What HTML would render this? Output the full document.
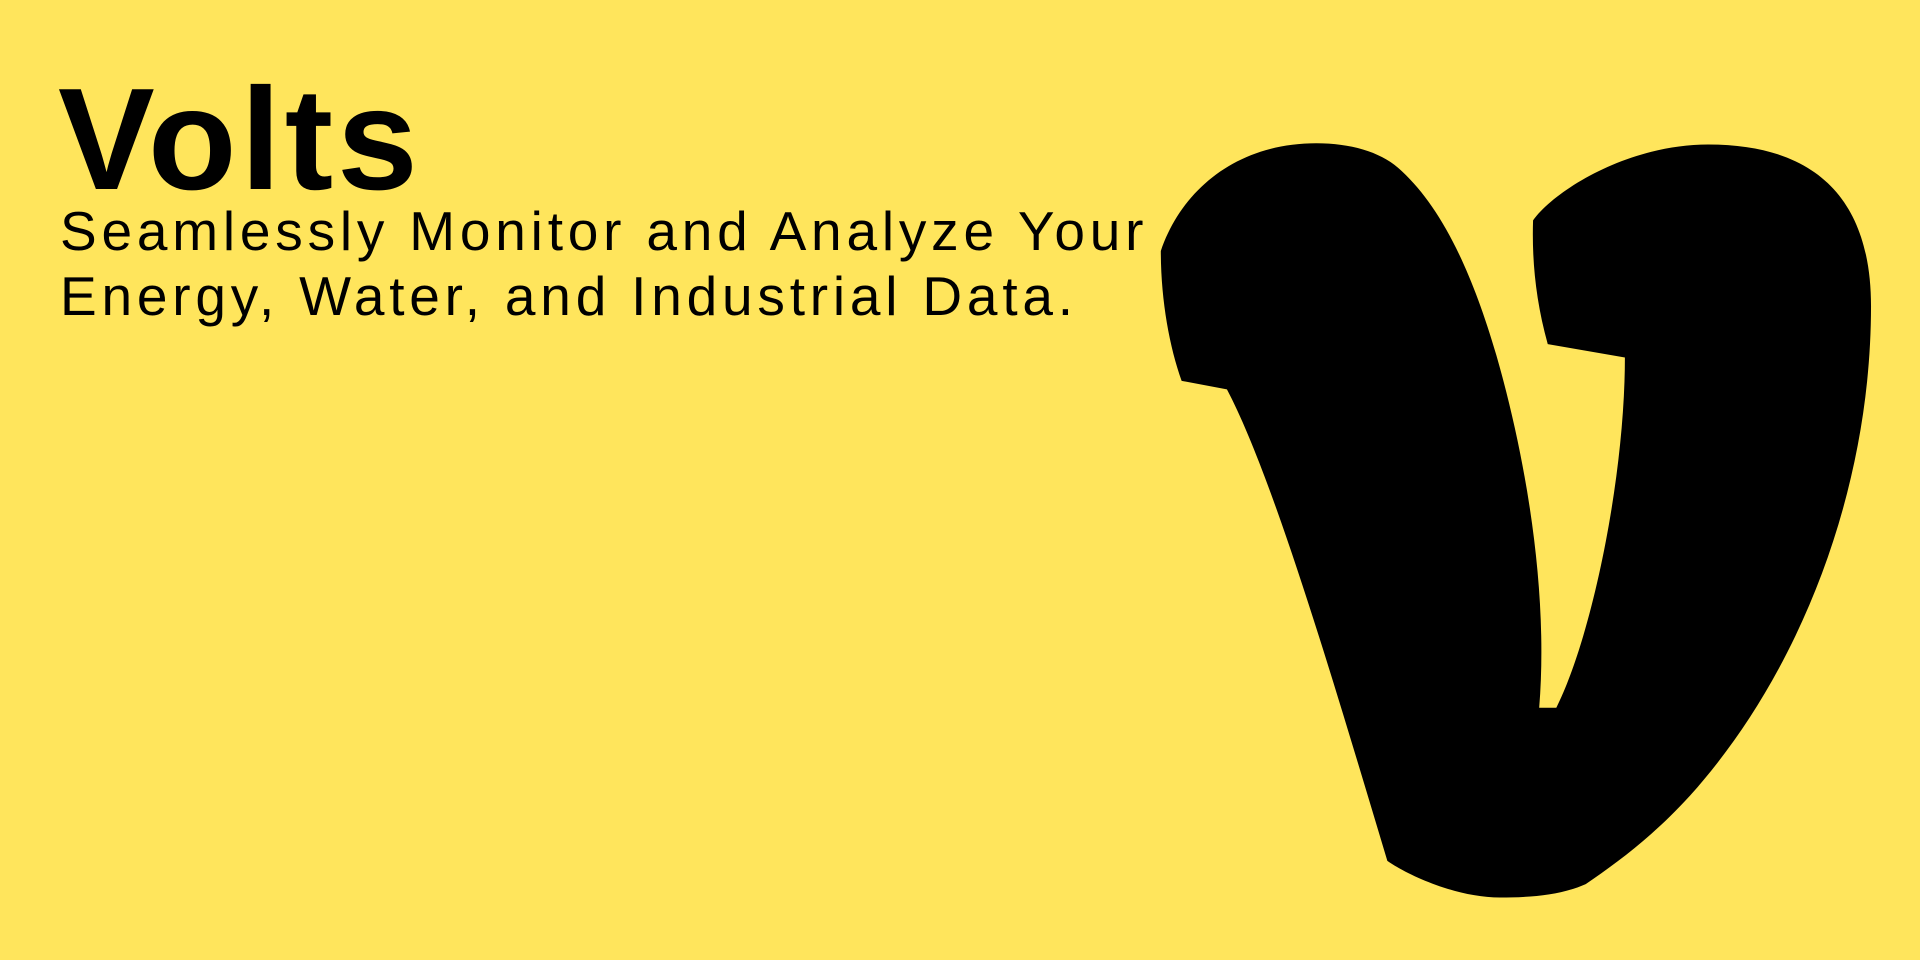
<!DOCTYPE html>
<html><head><meta charset="utf-8"><style>
html,body{margin:0;padding:0}
body{width:1920px;height:960px;background:#FFE55C;position:relative;overflow:hidden;font-family:"Liberation Sans",sans-serif;color:#000}
h1{position:absolute;left:58px;top:67px;margin:0;font-size:145px;font-weight:700;line-height:1;letter-spacing:4px}
p{position:absolute;left:60px;top:199px;margin:0;font-size:55px;line-height:65px;letter-spacing:4.8px;white-space:nowrap}
svg{position:absolute;left:0;top:0}
</style></head><body>
<h1>Volts</h1>
<p>Seamlessly Monitor and Analyze Your<br>Energy, Water, and Industrial Data.</p>
<svg width="1920" height="960" viewBox="0 0 1568 784">
<path fill="#000" d="M948,205 C965,155 1010,117 1075,117 C1105,117 1130,125 1145,140 C1175,168 1200,215 1222,290 C1245,370 1265,480 1257,578 L1271,578 C1300,520 1327,390 1327,292 L1264,281 C1254,245 1251,212 1252,180 C1270,155 1330,118 1395,118 C1490,118 1528,170 1528,250 C1528,400 1470,550 1380,650 C1350,683 1320,705 1295,722 C1275,731 1250,733 1225,733 C1190,733 1150,715 1133,703 C1090,560 1040,390 1002,318 L965,311 C955,283 948,245 948,205 Z"/>
</svg>
</body></html>
